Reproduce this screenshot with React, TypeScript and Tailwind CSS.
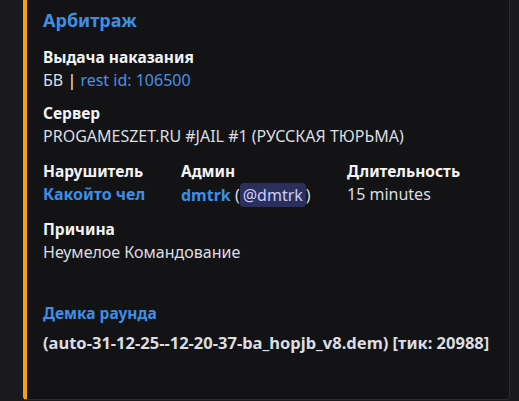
const fontStack = { fontFamily: '"Noto Sans", "Open Sans", sans-serif' };

const Field = ({ name, children, className = '' }: { name: string; children: React.ReactNode; className?: string }) => (
  <div className={className}>
    <div className="text-[15.5px] leading-[22px] font-bold text-[#f2f3f5]">{name}</div>
    <div className="text-[16px] leading-[22px] mt-px text-[#dbdee1]">{children}</div>
  </div>
);

export default function App() {
  return (
    <div className="w-[519px] h-[401px] bg-[#1a1a1e] overflow-hidden pl-[23px] pr-[9px]" style={fontStack}>
      <div className="h-[400px] bg-[#131316] border-l-4 border-l-[#f0a30a] border-r border-b border-[#2b2b30] rounded-b-[4px] pl-4 pt-2">
        <div className="text-[18px] leading-6 font-bold text-[#3d8ee6]">Арбитраж</div>

        <Field name="Выдача наказания" className="mt-[14px]">
          БВ <span className="text-[#f2f3f5]">|</span> <span className="text-[#4a90e2]">rest id: 106500</span>
        </Field>

        <Field name="Сервер" className="mt-[11px]">
          PROGAMESZET.RU #JAIL #1 (РУССКАЯ ТЮРЬМА)
        </Field>

        <div className="grid grid-cols-[138px_166px_auto] mt-[13px]">
          <Field name="Нарушитель">
            <span className="font-bold text-[#3d8ee6]">Какойто чел</span>
          </Field>
          <Field name="Админ">
            <span className="font-bold text-[#3d8ee6]">dmtrk</span> (<span className="inline-block rounded-[4px] bg-[#2b2f5c] text-[#c9cdfb] px-[3px] leading-[24px]">@dmtrk</span>)
          </Field>
          <Field name="Длительность">15 minutes</Field>
        </div>

        <Field name="Причина" className="mt-[11px]">
          Неумелое Командование
        </Field>

        <div className="mt-[39px]">
          <div className="text-[15.5px] leading-[22px] font-bold text-[#3d8ee6]">Демка раунда</div>
          <div className="text-[16.5px] leading-[22px] mt-[8px] font-bold text-[#dbdee1]">
            (auto-31-12-25--12-20-37-ba_hopjb_v8.dem) [тик: 20988]
          </div>
        </div>
      </div>
    </div>
  );
}
